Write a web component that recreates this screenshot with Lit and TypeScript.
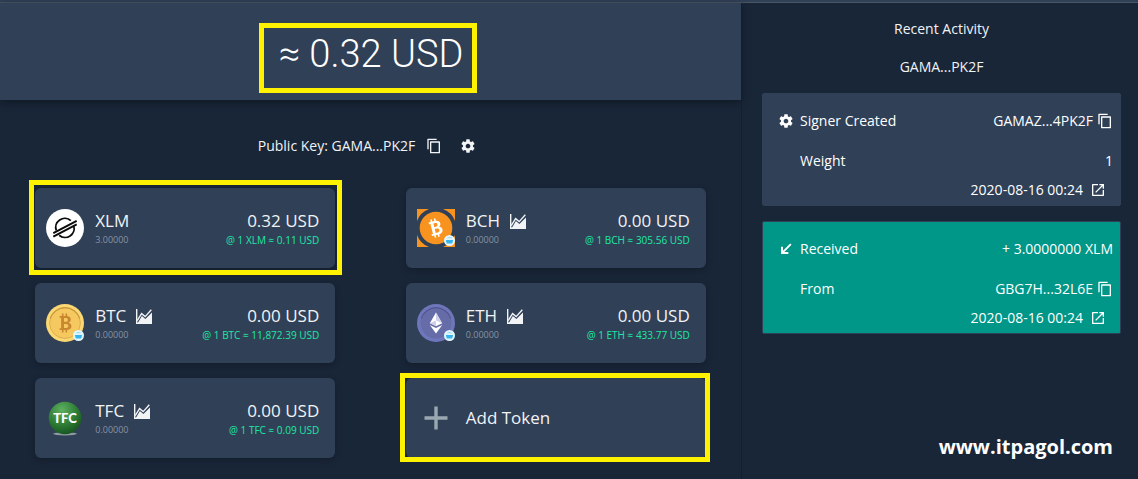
import { LitElement, html, svg, css, nothing } from "lit";
import { customElement, property } from "lit/decorators.js";

const COPY =
  "M16 1H3c-.6 0-1 .4-1 1v15h2V3h12V1zm4 4H7c-.6 0-1 .4-1 1v16c0 .6.4 1 1 1h13c.6 0 1-.4 1-1V6c0-.6-.4-1-1-1zm-1 16H8V7h11v14z";
const GEAR =
  "M19.43 12.98c.04-.32.07-.64.07-.98s-.03-.66-.07-.98l2.11-1.65c.19-.15.24-.42.12-.64l-2-3.46c-.12-.22-.39-.3-.61-.22l-2.49 1c-.52-.4-1.08-.73-1.69-.98l-.38-2.65C14.46 2.18 14.25 2 14 2h-4c-.25 0-.46.18-.49.42l-.38 2.65c-.61.25-1.17.59-1.69.98l-2.49-1c-.23-.09-.49 0-.61.22l-2 3.46c-.13.22-.07.49.12.64l2.11 1.65c-.04.32-.07.65-.07.98s.03.66.07.98l-2.11 1.65c-.19.15-.24.42-.12.64l2 3.46c.12.22.39.3.61.22l2.49-1c.52.4 1.08.73 1.69.98l.38 2.65c.03.24.24.42.49.42h4c.25 0 .46-.18.49-.42l.38-2.65c.61-.25 1.17-.59 1.69-.98l2.49 1c.23.09.49 0 .61-.22l2-3.46c.12-.22.07-.49-.12-.64l-2.11-1.65zM12 15.5c-1.93 0-3.5-1.57-3.5-3.5s1.57-3.5 3.5-3.5 3.5 1.57 3.5 3.5-1.57 3.5-3.5 3.5z";
const OPEN =
  "M19 19H5V5h7V3H4c-.6 0-1 .4-1 1v16c0 .6.4 1 1 1h16c.6 0 1-.4 1-1v-8h-2v7zM14 3v2h3.59l-9.83 9.83 1.41 1.41L19 6.41V10h2V3h-7z";
const RECEIVED = "M20.3 5.700L18.300 3.700 7.500 14.500V8.500H4.500V19.500H15.500V16.500H9.500z";

const icon = (d: string) =>
  html`<svg class="icon" viewBox="0 0 24 24" width="16" height="16" aria-hidden="true"><path d=${d} fill="currentColor" /></svg>`;

const chartIcon = html`<svg class="chart" viewBox="0 0 16 15" width="16" height="15" aria-hidden="true">
  <path d="M.7 0V14.3H16" fill="none" stroke="currentColor" stroke-width="1.4" />
  <path d="M1.2 11.6L5.6 4.6L9.2 7.6L15.3 .8" fill="none" stroke="currentColor" stroke-width="1.4" />
  <path d="M1.5 14.5L5.9 7L9.4 10L16 3.4V15H1.5Z" fill="currentColor" />
</svg>`;

const badge = svg`<circle cx="32.5" cy="31.5" r="5.5" fill="#e4f6fd" />
  <path d="M28.8 31H36.2L35.2 34.6H29.8Z" fill="#35b5ea" />
  <path d="M29.5 29.2Q32.5 26.6 35.5 29.2Z" fill="#9adcf5" />`;

const bitcoinGlyph = svg`<path d="M-5.4-7H1.4C4.3-7 5.8-5.6 5.8-3.5C5.8-1.8 4.9-.7 3.4-.3C5.3 0 6.4 1.400 6.4 3.200C6.4 5.700 4.500 7 1.500 7H-5.4V5.200H-3.9V-5.200H-5.4ZM-1-4.900V-1.200H.8C2.100-1.200 2.800-1.900 2.800-3.100C2.800-4.300 2.100-4.900.8-4.900ZM-1 .9V4.900H1.100C2.600 4.900 3.300 4.200 3.300 2.900C3.300 1.600 2.600.9 1.100.9Z" fill="currentColor" fill-rule="evenodd" />
  <path d="M-2.300-9.400V-6.500M1.300-9.400V-6.500M-2.300 6.500V9.400M1.300 6.500V9.400" stroke="currentColor" stroke-width="1.600" />`;

const logos: Record<string, unknown> = {
  XLM: svg`<circle cx="19" cy="19" r="19" fill="#fff" />
    <g fill="none" stroke="#0b0b0b" stroke-width="1.800">
      <path d="M10.300 21.500A9 9 0 0 1 24.800 11.700" />
      <path d="M27.700 16.700A9 9 0 0 1 13.200 26.200" />
      <path d="M7.300 24.200L30.700 11.900M7.300 27.700L30.700 15.400" stroke-width="2" />
    </g>`,
  BCH: svg`<rect width="38" height="38" fill="#f7931e" />
    <path d="M12 0A20.500 20.500 0 0 0 0 12V26A20.500 20.500 0 0 0 12 38H26A20.500 20.500 0 0 0 38 26V12A20.500 20.500 0 0 0 26 0Z" fill="#304057" />
    <circle cx="19" cy="19" r="16.300" fill="#f7931e" />
    <g transform="translate(18.500 19) rotate(-14)" color="#fff">${bitcoinGlyph}</g>${badge}`,
  BTC: svg`<circle cx="19" cy="19" r="19" fill="#fbd872" />
    <circle cx="19" cy="19" r="15.400" fill="#f5c860" stroke="#dfae4e" stroke-width="1" />
    <path d="M4.300 14.500A15.400 15.400 0 0 1 33.700 14.500" fill="none" stroke="#c9983f" stroke-width="1.200" />
    <g transform="translate(19 19)" color="#c9882f">${bitcoinGlyph}</g>${badge}`,
  ETH: svg`<circle cx="19" cy="19" r="19" fill="#6f76bb" />
    <circle cx="19" cy="19" r="15.400" fill="#666ca8" />
    <path d="M4.300 14.500A15.400 15.400 0 0 1 33.700 14.500" fill="none" stroke="#51568f" stroke-width="1.200" />
    <path d="M19 8.500L12.800 19.300L19 22.300L25.200 19.300Z" fill="#fff" />
    <path d="M19 8.500V22.300L25.200 19.300ZM12.800 19.300L19 16.600L25.200 19.300L19 22.300Z" fill="#b9bcdf" fill-opacity=".7" />
    <path d="M12.800 20.900L19 24.100L25.200 20.900L19 29.500Z" fill="#fff" />${badge}`,
  TFC: svg`<defs><radialGradient id="g" cx=".4" cy=".25" r=".8"><stop offset="0" stop-color="#5db061" /><stop offset=".6" stop-color="#2c7a33" /><stop offset="1" stop-color="#155020" /></radialGradient></defs>
    <ellipse cx="19" cy="34.800" rx="12" ry="1.600" fill="#8d9a9f" />
    <circle cx="19" cy="19" r="16.300" fill="url(#g)" />
    <text x="19" y="24" text-anchor="middle" font-family="Lato, sans-serif" font-weight="900" font-size="13" fill="#fff">TFC</text>`,
};

const shared = css`
  * { box-sizing: border-box; }
  button, a { font: inherit; color: inherit; text-decoration: none; }
  button { background: none; border: 0; padding: 0; cursor: pointer; }
  svg { display: block; flex: none; }
  .icon-button { display: flex; }
`;

@customElement("token-card")
class TokenCard extends LitElement {
  @property() code = "";
  @property() balance = "0.00000";
  @property() value = "0.00";
  @property() rate = "";
  @property({ type: Boolean }) chart = false;

  static styles = [
    shared,
    css`
      :host {
        display: flex;
        align-items: center;
        height: 80px;
        padding: 0 16px 0 11px;
        border-radius: 6px;
        background: #304057;
        box-shadow: 0 2px 6px rgba(0, 0, 0, 0.25);
      }
      .body { flex: 1; display: grid; grid-template-columns: auto 1fr; row-gap: 1px; margin-left: 11px; padding-bottom: 1px; }
      .name { display: flex; align-items: center; gap: 10px; }
      .name, .value { font-size: 17px; line-height: 24px; }
      .value, .rate { text-align: right; }
      .balance, .rate { line-height: 12px; }
      .balance { font-size: 9px; color: #8793a2; }
      .rate { font-size: 10px; color: #1de9a4; }
    `,
  ];

  render() {
    return html`
      <svg viewBox="0 0 38 38" width="38" height="38" role="img" aria-label=${this.code}>${logos[this.code]}</svg>
      <div class="body">
        <div class="name">
          <span>${this.code}</span>
          ${this.chart ? html`<button class="icon-button" aria-label="Chart">${chartIcon}</button>` : nothing}
        </div>
        <div class="value">${this.value} USD</div>
        <div class="balance">${this.balance}</div>
        <div class="rate">@ 1 ${this.code} ≈ ${this.rate} USD</div>
      </div>
    `;
  }
}

@customElement("activity-card")
class ActivityCard extends LitElement {
  @property() kind = "signer";
  @property() heading = "";
  @property() amount = "";
  @property() label = "";
  @property() detail = "";
  @property() date = "";

  static styles = [
    shared,
    css`
      :host {
        display: block;
        padding: 7px 7px 6px 15px;
        border: 1px solid #304057;
        border-radius: 2px;
        background: #304057;
        color: #fff;
        font-size: 14px;
        line-height: 20px;
      }
      :host([kind="received"]) { background: #009688; }
      .row { display: flex; align-items: center; height: 40px; }
      .lead { width: 22px; flex: none; }
      .label { flex: 1; }
      .end { display: flex; align-items: center; gap: 4px; }
      .date { display: flex; align-items: center; justify-content: flex-end; gap: 7px; padding-right: 7px; height: 18px; }
    `,
  ];

  private account(text: string) {
    return text.includes("...")
      ? html`${text}<button class="icon-button" aria-label="Copy address">${icon(COPY)}</button>`
      : text;
  }

  render() {
    return html`
      <div class="row">
        <span class="lead">${icon(this.kind === "signer" ? GEAR : RECEIVED)}</span>
        <span class="label">${this.heading}</span>
        <span class="end">${this.account(this.amount)}</span>
      </div>
      <div class="row">
        <span class="lead"></span>
        <span class="label">${this.label}</span>
        <span class="end">${this.account(this.detail)}</span>
      </div>
      <div class="date">
        <time>${this.date}</time>
        <a href="#" aria-label="Open transaction">${icon(OPEN)}</a>
      </div>
    `;
  }
}

@customElement("app-root")
class AppRoot extends LitElement {
  static styles = [
    shared,
    css`
      :host {
        display: flex;
        flex-direction: column;
        min-height: 100vh;
        background: #192638;
        color: #f1f3f5;
        font-family: "Open Sans", "Noto Sans", sans-serif;
        font-size: 14px;
        line-height: 20px;
      }
      .strip { height: 3px; background: #304057; border-bottom: 1px solid #4b5563; }
      .layout { flex: 1; display: grid; grid-template-columns: 28fr 15fr; }
      .total {
        display: flex;
        justify-content: center;
        height: 97px;
        padding: 20px 5px 0 0;
        background: #304057;
        box-shadow: 0 2px 8px rgba(0, 0, 0, 0.4);
      }
      h1 {
        margin: 0;
        height: 70px;
        padding: 0 9px 0 15px;
        border: 5px solid #fff200;
        font: 300 38px/52px Roboto, sans-serif;
        color: #fff;
      }
      .key { display: flex; align-items: center; justify-content: center; height: 20px; margin: 36px 7px 32px 0; }
      .key button { margin-left: 11px; }
      .key button + button { margin-left: 18px; }
      .tokens { display: grid; grid-template-columns: 1fr 1fr; gap: 15px 0; justify-items: center; padding-bottom: 20px; }
      .cell { position: relative; width: 300px; }
      .mark::after { content: ""; position: absolute; border: 5px solid #fff200; inset: -8px -7px -7px -6px; pointer-events: none; }
      .mark.tight::after { inset: -5px -4px -4px -6px; }
      .add {
        display: flex;
        align-items: center;
        gap: 18px;
        width: 100%;
        height: 80px;
        padding: 0 18px;
        border-radius: 6px;
        background: #304057;
        font-size: 17px;
        line-height: 24px;
      }
      aside {
        display: flex;
        flex-direction: column;
        padding: 16px 17px 16px 20px;
        border-left: 1px solid #131e2e;
      }
      h2 { margin: 0 0 18px; font: inherit; text-align: center; }
      .account { margin: 0 0 16px; text-align: center; }
      .list { display: grid; gap: 15px; }
      .site { margin: auto 8px 0 auto; font-size: 20px; line-height: 32px; font-weight: 700; color: #fff; }
    `,
  ];

  render() {
    return html`
      <div class="strip"></div>
      <div class="layout">
        <main>
          <div class="total"><h1>≈ 0.32 USD</h1></div>
          <div class="key">
            <span>Public Key: GAMA...PK2F</span>
            <button class="icon-button" aria-label="Copy public key">${icon(COPY)}</button>
            <button class="icon-button" aria-label="Account settings">${icon(GEAR)}</button>
          </div>
          <div class="tokens">
            <div class="cell mark"><token-card code="XLM" balance="3.00000" value="0.32" rate="0.11"></token-card></div>
            <div class="cell"><token-card code="BCH" rate="305.56" chart></token-card></div>
            <div class="cell"><token-card code="BTC" rate="11,872.39" chart></token-card></div>
            <div class="cell"><token-card code="ETH" rate="433.77" chart></token-card></div>
            <div class="cell"><token-card code="TFC" rate="0.09" chart></token-card></div>
            <div class="cell mark tight">
              <button class="add">
                <svg viewBox="0 0 24 24" width="24" height="24" aria-hidden="true"><path d="M12 .5V23.500M.5 12H23.500" stroke="#9aa8b2" stroke-width="3.400" /></svg>
                Add Token
              </button>
            </div>
          </div>
        </main>
        <aside>
          <h2>Recent Activity</h2>
          <p class="account">GAMA...PK2F</p>
          <div class="list">
            <activity-card kind="signer" heading="Signer Created" amount="GAMAZ...4PK2F" label="Weight" detail="1" date="2020-08-16 00:24"></activity-card>
            <activity-card kind="received" heading="Received" amount="+ 3.0000000 XLM" label="From" detail="GBG7H...32L6E" date="2020-08-16 00:24"></activity-card>
          </div>
          <a class="site" href="#">www.itpagol.com</a>
        </aside>
      </div>
    `;
  }
}
